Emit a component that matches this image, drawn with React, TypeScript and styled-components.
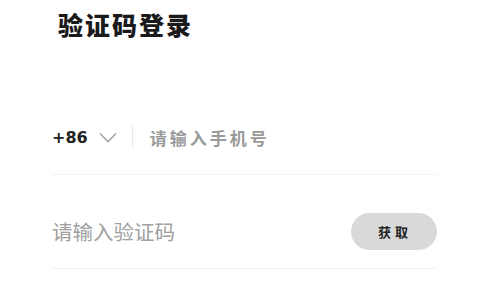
import React from "react";
import styled, { createGlobalStyle } from "styled-components";

const Global = createGlobalStyle`
  body {
    margin: 0;
    background: #fff;
  }
`;

const Page = styled.div`
  width: 498px;
  height: 286px;
  overflow: hidden;
  box-sizing: border-box;
  padding: 8px 61px 0 52px;
`;

const Title = styled.h1`
  margin: 0 0 0 6px;
  font-family: "Noto Sans CJK SC", sans-serif;
  font-size: 25px;
  font-weight: 900;
  letter-spacing: 2px;
  color: #1a1a1a;
  line-height: 32px;
`;

const Form = styled.div`
  margin-top: 60px;
  display: flex;
  flex-direction: column;
  gap: 19px;
`;

const Row = styled.div`
  display: flex;
  align-items: center;
  box-sizing: border-box;
  height: 75px;
  border-bottom: 1px solid #f2f2f2;
`;

const Code = styled.span`
  font-family: "DejaVu Sans", sans-serif;
  font-size: 16px;
  font-weight: bold;
  color: #222;
`;

const Chevron = styled.svg`
  margin-left: 11px;
  width: 18px;
  height: 11px;
`;

const Divider = styled.span`
  width: 1px;
  height: 22px;
  background: #e8e8e8;
  margin: 0 17px 0 15px;
`;

const PhoneHint = styled.span`
  font-family: "Noto Sans CJK SC", sans-serif;
  font-size: 17px;
  font-weight: bold;
  letter-spacing: 3px;
  color: #9a9a9a;
`;

const CodeHint = styled.span`
  flex: 1;
  font-family: "Noto Sans CJK SC", sans-serif;
  font-size: 20.5px;
  color: #a0a0a0;
`;

const GetButton = styled.button`
  width: 86px;
  height: 37px;
  border: none;
  border-radius: 19px;
  background: #d9d9d9;
  font-family: "Noto Sans CJK SC", sans-serif;
  font-size: 13px;
  font-weight: bold;
  letter-spacing: 4px;
  text-indent: 2px;
  color: #222;
  padding: 0;
`;

export default function App() {
  return (
    <>
      <Global />
      <Page>
        <Title>验证码登录</Title>
        <Form>
          <Row>
            <Code>+86</Code>
            <Chevron viewBox="0 0 18 11">
              <path d="M1 1.5l8 8 8-8" fill="none" stroke="#a6a6a6" strokeWidth="1.6" />
            </Chevron>
            <Divider />
            <PhoneHint>请输入手机号</PhoneHint>
          </Row>
          <Row>
            <CodeHint>请输入验证码</CodeHint>
            <GetButton>获取</GetButton>
          </Row>
        </Form>
      </Page>
    </>
  );
}
